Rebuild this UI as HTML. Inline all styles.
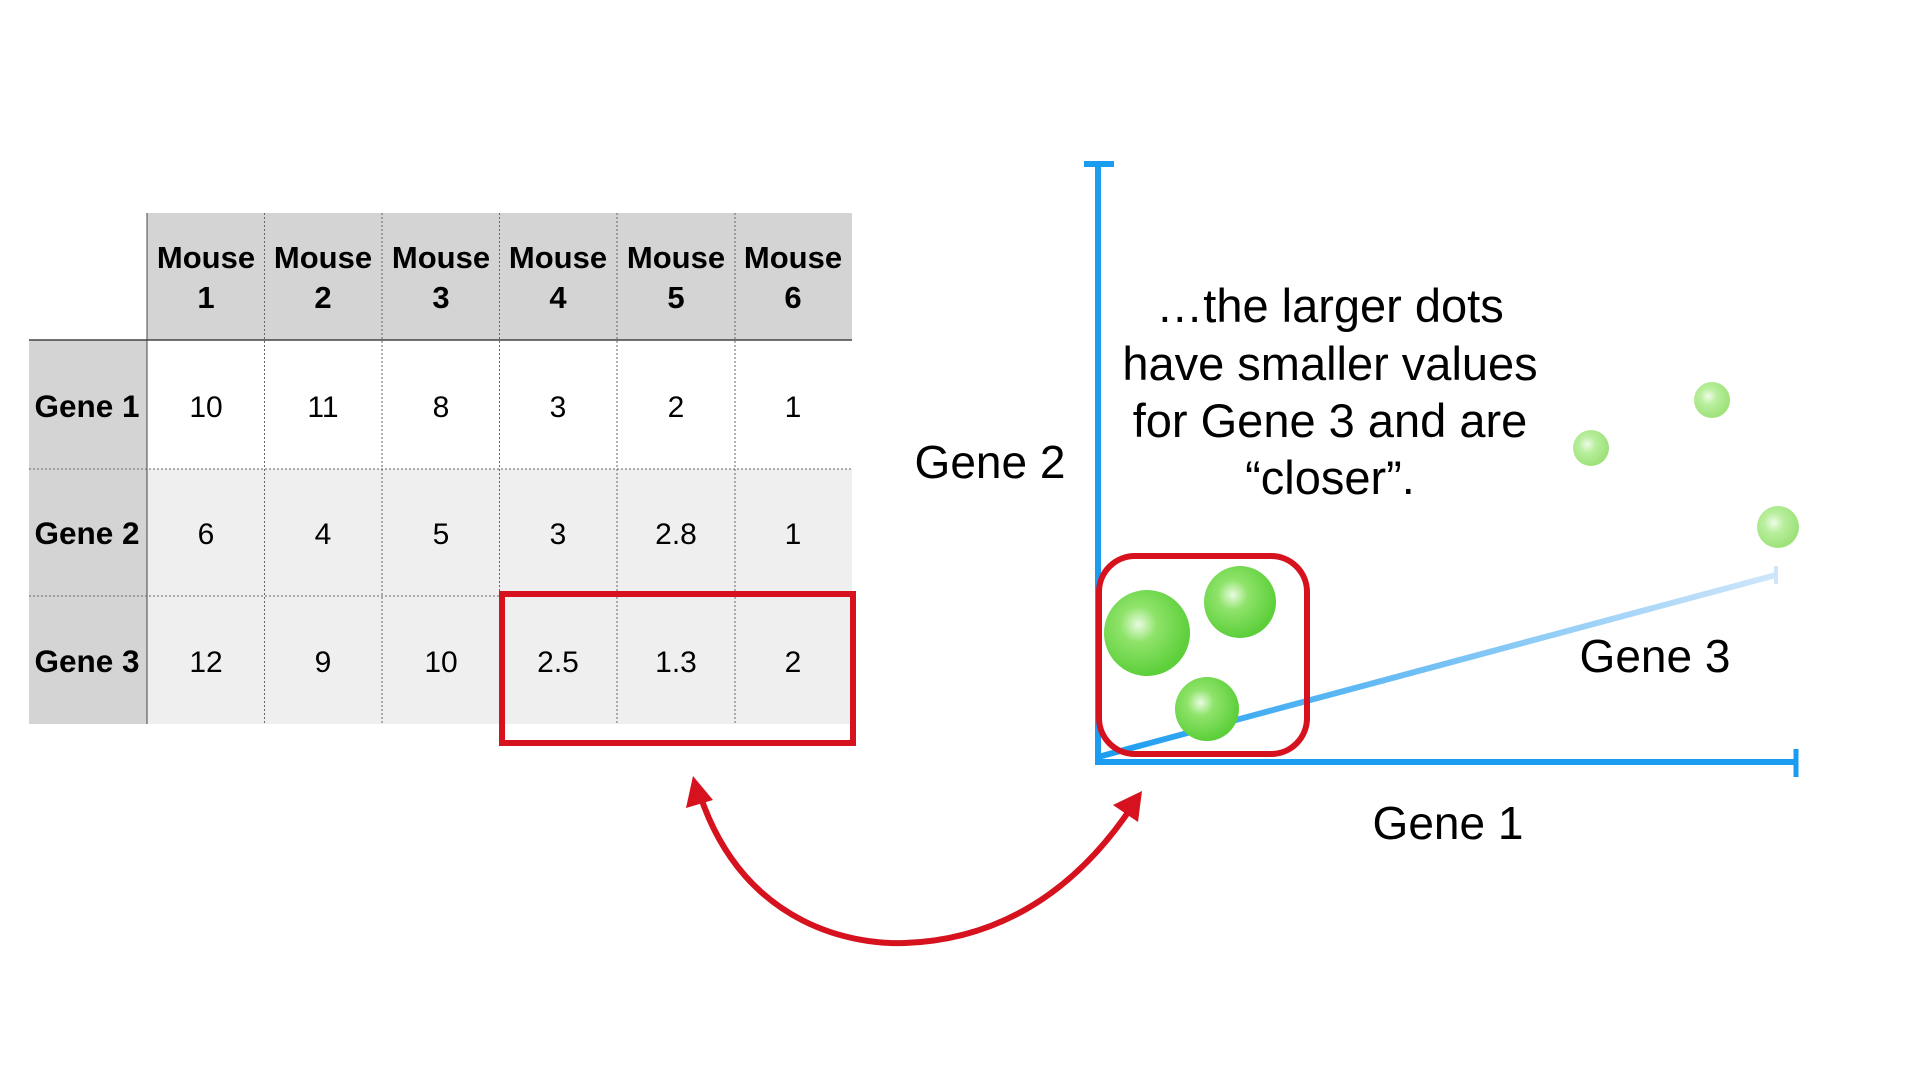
<!DOCTYPE html>
<html><head><meta charset="utf-8"><style>
html,body{margin:0;padding:0;background:#fff;}
svg{display:block;}
text{font-family:"Liberation Sans",sans-serif;}
</style></head><body>
<svg width="1920" height="1080" viewBox="0 0 1920 1080" xmlns="http://www.w3.org/2000/svg">
<defs>
<radialGradient id="g" cx="0.4" cy="0.4" r="0.6">
<stop offset="0" stop-color="#e8fbe0"/><stop offset="0.35" stop-color="#8fe36a"/><stop offset="1" stop-color="#5ccf3a"/>
</radialGradient>
<radialGradient id="gl" cx="0.4" cy="0.4" r="0.6">
<stop offset="0" stop-color="#eefbe6"/><stop offset="0.4" stop-color="#b8ee9c"/><stop offset="1" stop-color="#9de27a"/>
</radialGradient>
<linearGradient id="lg" x1="1098" y1="757" x2="1776" y2="575" gradientUnits="userSpaceOnUse">
<stop offset="0" stop-color="#1a9cf0"/><stop offset="1" stop-color="#cfe6fa"/>
</linearGradient>
</defs>
<rect x="147" y="213" width="705" height="127" fill="#d4d4d4"/>
<rect x="29" y="340" width="118" height="384" fill="#d4d4d4"/>
<rect x="147" y="340" width="705" height="129" fill="#fff"/>
<rect x="147" y="469" width="705" height="255" fill="#efefef"/>
<g stroke="#666" stroke-width="1" stroke-dasharray="2,2">
<line x1="147" y1="213" x2="147" y2="724" stroke-dasharray="none" stroke="#444"/>
<line x1="264.5" y1="213" x2="264.5" y2="724"/>
<line x1="382" y1="213" x2="382" y2="724"/>
<line x1="499.5" y1="213" x2="499.5" y2="724"/>
<line x1="617" y1="213" x2="617" y2="724"/>
<line x1="735" y1="213" x2="735" y2="724"/>
<line x1="29" y1="469" x2="852" y2="469"/>
<line x1="29" y1="596" x2="852" y2="596"/>
</g>
<line x1="29" y1="340" x2="852" y2="340" stroke="#444" stroke-width="1.5"/>
<g font-size="31" font-weight="bold" text-anchor="middle" fill="#000">
<text x="206" y="268">Mouse</text><text x="206" y="308">1</text>
<text x="323" y="268">Mouse</text><text x="323" y="308">2</text>
<text x="441" y="268">Mouse</text><text x="441" y="308">3</text>
<text x="558" y="268">Mouse</text><text x="558" y="308">4</text>
<text x="676" y="268">Mouse</text><text x="676" y="308">5</text>
<text x="793" y="268">Mouse</text><text x="793" y="308">6</text>
</g>
<g font-size="31.5" font-weight="bold" text-anchor="middle" fill="#000">
<text x="87" y="417">Gene 1</text>
<text x="87" y="544">Gene 2</text>
<text x="87" y="672">Gene 3</text>
</g>
<g font-size="30" text-anchor="middle" fill="#000">
<text x="206" y="417">10</text><text x="323" y="417">11</text><text x="441" y="417">8</text><text x="558" y="417">3</text><text x="676" y="417">2</text><text x="793" y="417">1</text>
<text x="206" y="544">6</text><text x="323" y="544">4</text><text x="441" y="544">5</text><text x="558" y="544">3</text><text x="676" y="544">2.8</text><text x="793" y="544">1</text>
<text x="206" y="672">12</text><text x="323" y="672">9</text><text x="441" y="672">10</text><text x="558" y="672">2.5</text><text x="676" y="672">1.3</text><text x="793" y="672">2</text>
</g>
<rect x="502" y="594" width="351" height="149" fill="none" stroke="#d6121e" stroke-width="6"/>
<line x1="1098" y1="163" x2="1098" y2="764" stroke="#1a9cf0" stroke-width="6"/>
<line x1="1084" y1="164" x2="1114" y2="164" stroke="#1a9cf0" stroke-width="6"/>
<line x1="1095" y1="762" x2="1796" y2="762" stroke="#1a9cf0" stroke-width="6"/>
<line x1="1796" y1="749" x2="1796" y2="777" stroke="#1a9cf0" stroke-width="5"/>
<line x1="1098" y1="757" x2="1776" y2="575" stroke="url(#lg)" stroke-width="6"/>
<line x1="1776" y1="566" x2="1776" y2="584" stroke="#cfe6fa" stroke-width="4"/>
<circle cx="1591" cy="448" r="18" fill="url(#gl)"/>
<circle cx="1712" cy="400" r="18" fill="url(#gl)"/>
<circle cx="1778" cy="527" r="21" fill="url(#gl)"/>
<circle cx="1147" cy="633" r="43" fill="url(#g)"/>
<circle cx="1240" cy="602" r="36" fill="url(#g)"/>
<circle cx="1207" cy="709" r="32" fill="url(#g)"/>
<rect x="1099" y="556" width="208" height="198" rx="36" fill="none" stroke="#d6121e" stroke-width="6"/>
<g font-size="46" text-anchor="middle" fill="#000">
<text x="990" y="478">Gene 2</text>
<text x="1655" y="672">Gene 3</text>
<text x="1448" y="839">Gene 1</text>
</g>
<g font-size="47" text-anchor="middle" fill="#000">
<text x="1330" y="322">…the larger dots</text>
<text x="1330" y="380">have smaller values</text>
<text x="1330" y="437">for Gene 3 and are</text>
<text x="1330" y="494">“closer”.</text>
</g>
<path d="M 700 795 C 745 930 860 945 905 943 C 990 940 1070 900 1133 805" fill="none" stroke="#d6121e" stroke-width="6"/>
<polygon points="693,776 686,808 713,800" fill="#d6121e"/>
<polygon points="1142,791 1113,805 1138,822" fill="#d6121e"/>
</svg>
</body></html>
